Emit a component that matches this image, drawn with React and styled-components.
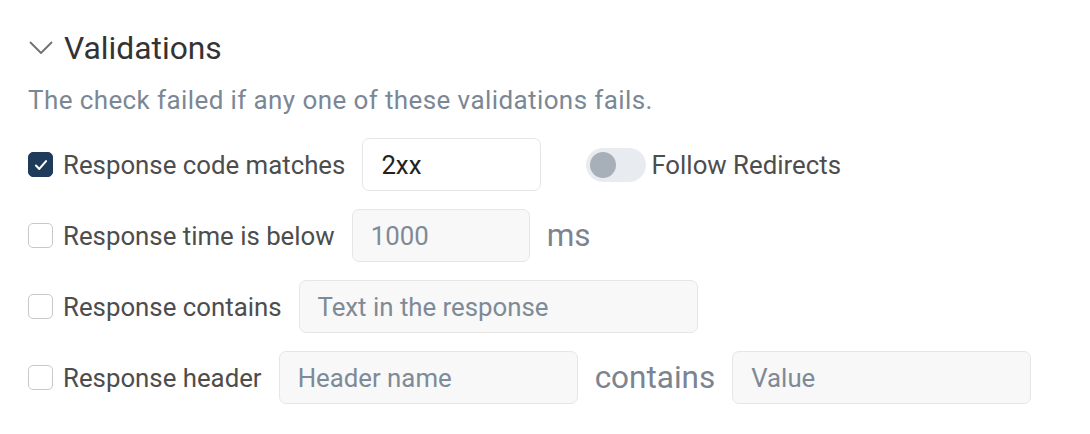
import React from "react";
import styled, { createGlobalStyle } from "styled-components";

const Global = createGlobalStyle`
  html, body { margin: 0; padding: 0; background: #fff; }
  body { font-family: Roboto, "Noto Sans", sans-serif; }
  * { box-sizing: border-box; }
`;

const Panel = styled.section`
  padding: 30px 0 0 28px;
  display: flex;
  flex-direction: column;
`;

const Header = styled.div`
  display: flex;
  align-items: center;
  gap: 11px;
  height: 36px;
`;

const Chevron = styled.svg`
  width: 24px;
  height: 24px;
  margin-left: 1px;
  flex: none;
`;

const Title = styled.h2`
  margin: 0;
  font-size: 31.8px;
  font-weight: 400;
  color: #333;
`;

const Description = styled.p`
  margin: 20px 0 24px;
  font-size: 26px;
  letter-spacing: 0.4px;
  color: #7b8794;
  line-height: 28px;
  white-space: nowrap;
`;

const List = styled.div`
  display: flex;
  flex-direction: column;
  gap: 18px;
`;

const Row = styled.div`
  display: flex;
  align-items: center;
  height: 53px;
`;

const Check = styled.span`
  width: 25px;
  height: 25px;
  border-radius: 5px;
  flex: none;
  display: inline-flex;
  align-items: center;
  justify-content: center;
  background: ${(p) => (p.$on ? "#1e3b5b" : "#fff")};
  border: 1.5px solid ${(p) => (p.$on ? "#1e3b5b" : "#c9c9c9")};
  margin-right: 10px;
`;

const Label = styled.span`
  font-size: 25.8px;
  color: #4d4d4d;
  margin-right: 17px;
  white-space: nowrap;
`;

const Input = styled.div`
  width: ${(p) => p.$w}px;
  height: 53px;
  border: 1.5px solid #e6e6e6;
  border-radius: 7px;
  background: ${(p) => (p.$disabled ? "#f8f8f8" : "#fff")};
  display: flex;
  align-items: center;
  padding-left: 18px;
  font-size: 25.8px;
  color: ${(p) => (p.$placeholder ? "#7e8a96" : "#222")};
  flex: none;
  white-space: nowrap;
`;

const Unit = styled.span`
  font-size: 31.5px;
  color: #7b8490;
  margin: 0 17px;
`;

const Toggle = styled.span`
  margin-left: 45px;
  width: 60px;
  height: 34px;
  border-radius: 17px;
  background: #e8ecf1;
  display: inline-flex;
  align-items: center;
  padding-left: 4px;
  flex: none;
`;

const Thumb = styled.span`
  width: 26px;
  height: 26px;
  border-radius: 50%;
  background: #a7afb8;
`;

const ToggleLabel = styled.span`
  margin-left: 5px;
  font-size: 25.8px;
  color: #4d4d4d;
`;

function CheckBox({ on }) {
  return (
    <Check $on={on}>
      {on && (
        <svg width="18" height="18" viewBox="0 0 16 16">
          <path d="M3.5 8.5l3 3 6-7" fill="none" stroke="#fff" strokeWidth="1.8" strokeLinecap="round" strokeLinejoin="round" />
        </svg>
      )}
    </Check>
  );
}

export default function App() {
  return (
    <>
      <Global />
      <Panel>
        <Header>
          <Chevron viewBox="0 0 24 24">
            <path d="M1.5 6.5l10.5 10.5 10.5-10.5" fill="none" stroke="#707070" strokeWidth="1.8" strokeLinecap="round" strokeLinejoin="round" />
          </Chevron>
          <Title>Validations</Title>
        </Header>
        <Description>The check failed if any one of these validations fails.</Description>
        <List>
          <Row>
            <CheckBox on />
            <Label>Response code matches</Label>
            <Input $w={179}>2xx</Input>
            <Toggle><Thumb /></Toggle>
            <ToggleLabel>Follow Redirects</ToggleLabel>
          </Row>
          <Row>
            <CheckBox />
            <Label>Response time is below</Label>
            <Input $w={178} $disabled $placeholder>1000</Input>
            <Unit>ms</Unit>
          </Row>
          <Row>
            <CheckBox />
            <Label>Response contains</Label>
            <Input $w={399} $disabled $placeholder>Text in the response</Input>
          </Row>
          <Row>
            <CheckBox />
            <Label>Response header</Label>
            <Input $w={299} $disabled $placeholder>Header name</Input>
            <Unit>contains</Unit>
            <Input $w={299} $disabled $placeholder>Value</Input>
          </Row>
        </List>
      </Panel>
    </>
  );
}
